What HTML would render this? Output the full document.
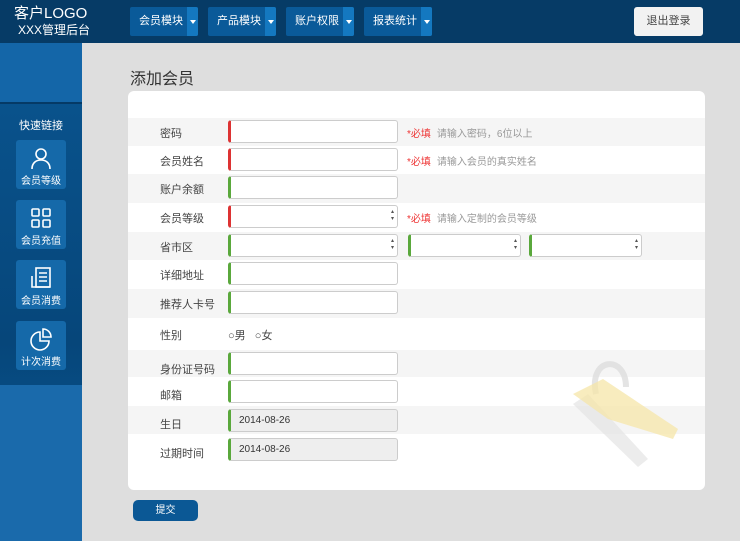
<!DOCTYPE html>
<html><head><meta charset="utf-8"><style>
*{margin:0;padding:0;box-sizing:border-box}
body{width:740px;height:541px;overflow:hidden;position:relative;font-family:"Liberation Sans","Noto Sans CJK SC",sans-serif;background:#dedede;}
.hdr{position:absolute;left:0;top:0;width:740px;height:43px;background:#063b66;}
.logo{position:absolute;left:14px;top:6px;color:#fff;font-size:15px;line-height:16px}
.logo div:last-child{font-size:12px;margin-left:4px}
.nav{position:absolute;top:7px;height:29px;width:68px;background:#0a5a99;border-radius:2px;color:#fff;font-size:11px;line-height:29px;padding-left:9px}
.nav i{position:absolute;right:0;top:0;width:11px;height:29px;background:#1478c0;border-radius:0 2px 2px 0}
.nav i:after{content:"";position:absolute;left:3px;top:13px;border:3px solid transparent;border-top:4px solid #fff}
.out{position:absolute;left:634px;top:7px;width:69px;height:29px;background:#f2f2f2;border-radius:3px;font-size:11px;line-height:29px;text-align:center;color:#444}
.side{position:absolute;left:0;top:43px;width:82px;height:498px;background:linear-gradient(#0a5590,#06467a 60%,#0a5a98)}
.side .top{height:61px;background:#1466a8;border-bottom:2px solid #053a66}
.side .bot{position:absolute;left:0;top:342px;width:82px;height:156px;background:#1a6aab}
.ql{position:absolute;left:0;top:74px;width:82px;text-align:center;color:#fff;font-size:11px}
.ib{position:absolute;left:16px;width:50px;height:49px;background:#1569a9;border-radius:3px;color:#fff;font-size:10px;text-align:center}
.ib svg{display:block;margin:6px auto 2px}
.title{position:absolute;left:130px;top:65px;font-size:16px;color:#333}
.card{position:absolute;left:128px;top:91px;width:577px;height:399px;background:#fff;border-radius:6px}
.row{position:absolute;left:0;width:577px;font-size:11px;color:#444}
.row.s{background:#f5f5f5}
.row .l{position:absolute;left:32px}
.in{position:absolute;left:100px;width:170px;height:23px;border:1px solid #ccc;border-left:3px solid #5aa83c;border-radius:3px;background:#fff;font-size:10px;color:#333;padding-left:8px;line-height:21px}
.in.r{border-left-color:#d33}
.in.g{background:#eee}
.sel:after{content:"▴\A▾";white-space:pre;position:absolute;right:3px;top:3px;font-size:6px;line-height:7px;color:#555}
.hint{position:absolute;left:279px;font-size:10px;color:#999}
.hint b{color:#e33;font-weight:normal;margin-right:6px}
.btn{position:absolute;left:133px;top:500px;width:65px;height:21px;background:#0b5895;border-radius:5px;color:#fff;font-size:10px;text-align:center;line-height:21px}
.key{position:absolute;left:440px;top:258px;z-index:5}
</style></head><body>
<div class="hdr">
<div class="logo"><div>客户LOGO</div><div>XXX管理后台</div></div>
<div class="nav" style="left:130px">会员模块<i></i></div>
<div class="nav" style="left:208px">产品模块<i></i></div>
<div class="nav" style="left:286px">账户权限<i></i></div>
<div class="nav" style="left:364px">报表统计<i></i></div>
<div class="out">退出登录</div>
</div>
<div class="side"><div class="top"></div><div class="bot"></div>
<div class="ql">快速链接</div>
<div class="ib" style="top:97px"><svg width="24" height="24" viewBox="0 0 24 24" fill="none" stroke="#fff" stroke-width="1.6"><circle cx="12" cy="8" r="5"/><path d="M3 23c0-6 4-9 9-9s9 3 9 9"/></svg>会员等级</div>
<div class="ib" style="top:157px"><svg width="24" height="24" viewBox="0 0 24 24" fill="none" stroke="#fff" stroke-width="1.6"><rect x="3" y="3" width="7" height="7" rx="1"/><rect x="14" y="3" width="7" height="7" rx="1"/><rect x="3" y="14" width="7" height="7" rx="1"/><rect x="14" y="14" width="7" height="7" rx="1"/></svg>会员充值</div>
<div class="ib" style="top:217px"><svg width="24" height="24" viewBox="0 0 24 24" fill="none" stroke="#fff" stroke-width="1.6"><rect x="7" y="2" width="14" height="19"/><path d="M3 10v11h18M10 7h8M10 11h8M10 15h8"/></svg>会员消费</div>
<div class="ib" style="top:278px"><svg width="24" height="24" viewBox="0 0 24 24" fill="none" stroke="#fff" stroke-width="1.6"><path d="M11 5a9 9 0 1 0 9 9h-9z"/><path d="M14 2a8 8 0 0 1 8 8h-8z"/></svg>计次消费</div>
</div>
<div class="title">添加会员</div>
<div class="card">
<svg class="key" width="115" height="120" viewBox="0 0 115 120"><path d="M28 45 C20 8 58 5 58 38" fill="none" stroke="#ddd" stroke-width="6" opacity=".8"/><path d="M5 55 L20 45 L80 110 L70 118 Z" fill="#e4e4e4" opacity=".7"/><path d="M5 45 L35 30 L110 80 L105 90 L40 70 Z" fill="#f6e6a8" opacity=".75"/></svg>
<div class="row s" style="top:27px;height:28px"><span class="l" style="top:7px">密码</span><div class="in r" style="top:2px"></div><span class="hint" style="top:7px"><b>*必填</b>请输入密码，6位以上</span></div>
<div class="row" style="top:55px;height:28px"><span class="l" style="top:7px">会员姓名</span><div class="in r" style="top:2px"></div><span class="hint" style="top:7px"><b>*必填</b>请输入会员的真实姓名</span></div>
<div class="row s" style="top:83px;height:29px"><span class="l" style="top:7px">账户余额</span><div class="in" style="top:2px"></div></div>
<div class="row" style="top:112px;height:29px"><span class="l" style="top:7px">会员等级</span><div class="in r sel" style="top:2px"></div><span class="hint" style="top:7px"><b>*必填</b>请输入定制的会员等级</span></div>
<div class="row s" style="top:141px;height:28px"><span class="l" style="top:7px">省市区</span><div class="in sel" style="top:2px"></div><div class="in sel" style="top:2px;left:280px;width:113px"></div><div class="in sel" style="top:2px;left:401px;width:113px"></div></div>
<div class="row" style="top:169px;height:29px"><span class="l" style="top:7px">详细地址</span><div class="in" style="top:2px"></div></div>
<div class="row s" style="top:198px;height:29px"><span class="l" style="top:7px">推荐人卡号</span><div class="in" style="top:2px"></div></div>
<div class="row" style="top:227px;height:32px"><span class="l" style="top:9px">性别</span><span style="position:absolute;left:100px;top:9px">○男 &nbsp; ○女</span></div>
<div class="row s" style="top:259px;height:27px"><span class="l" style="top:11px">身份证号码</span><div class="in" style="top:2px"></div></div>
<div class="row" style="top:286px;height:29px"><span class="l" style="top:10px">邮箱</span><div class="in" style="top:3px"></div></div>
<div class="row s" style="top:315px;height:28px"><span class="l" style="top:10px">生日</span><div class="in g" style="top:3px">2014-08-26</div></div>
<div class="row" style="top:343px;height:29px"><span class="l" style="top:11px">过期时间</span><div class="in g" style="top:4px">2014-08-26</div></div>
</div>
<div class="btn">提交</div>
</body></html>
